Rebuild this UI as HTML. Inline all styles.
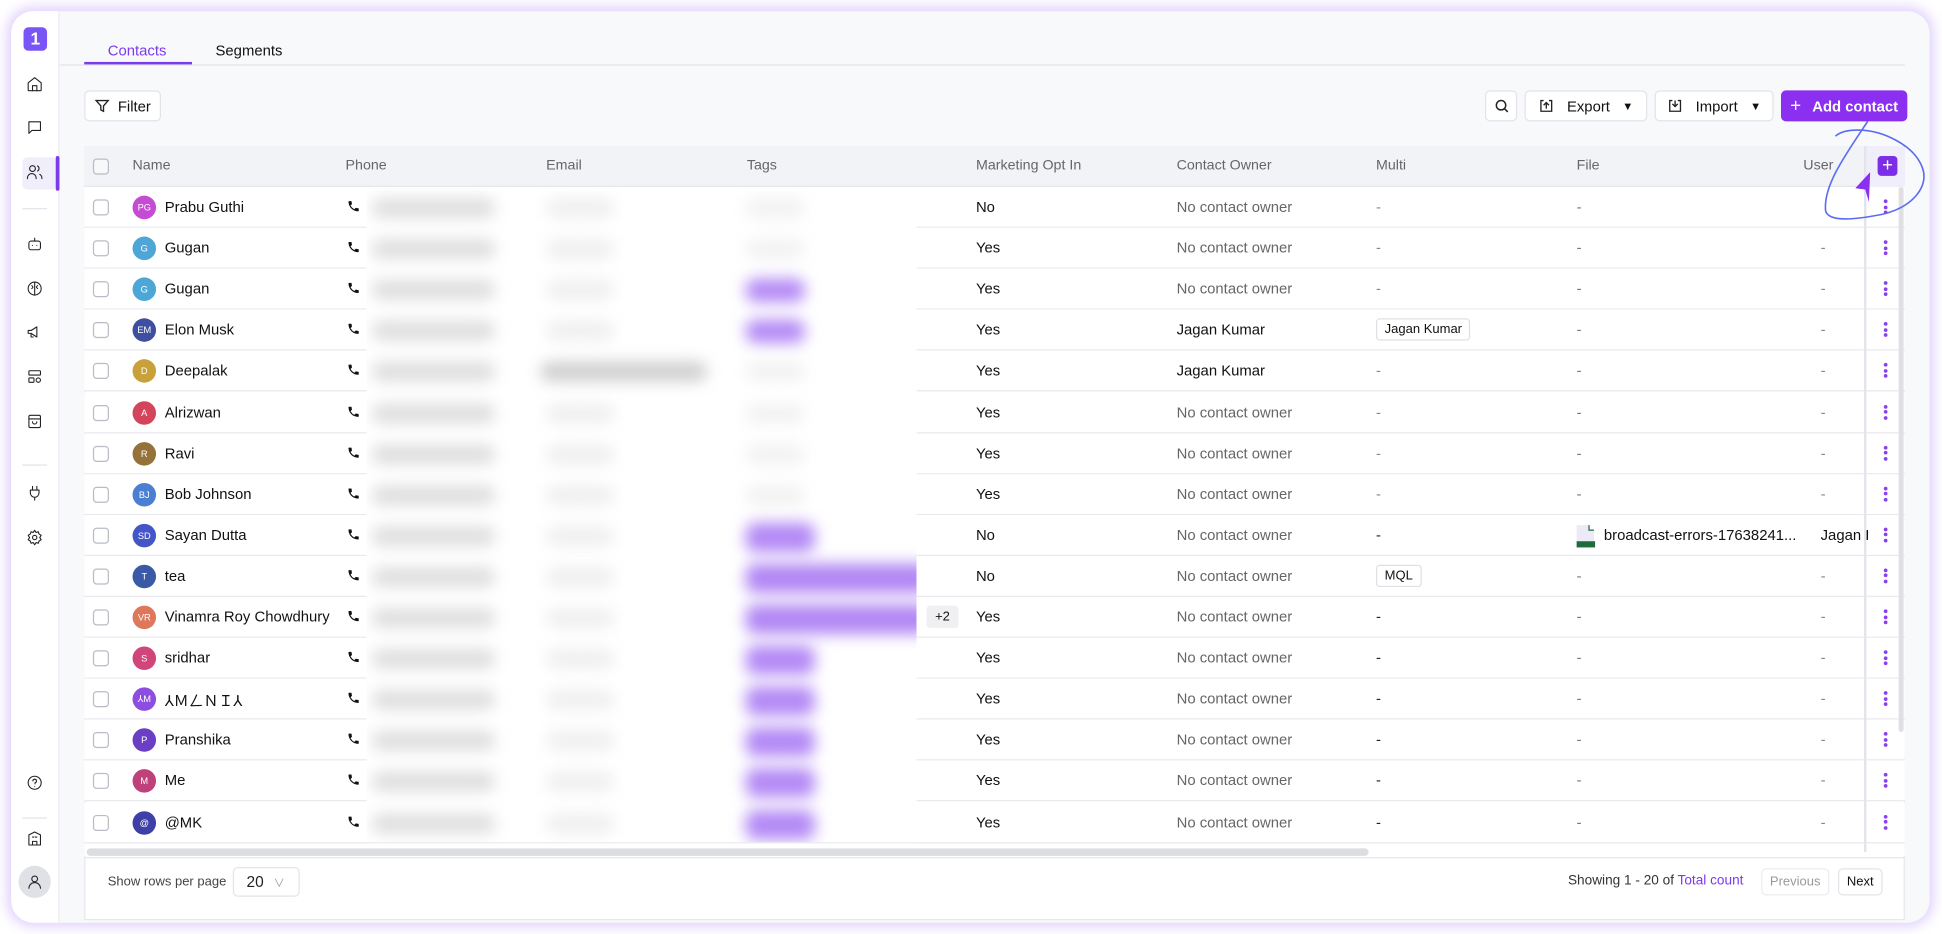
<!DOCTYPE html>
<html><head><meta charset="utf-8"><style>
*{box-sizing:border-box;margin:0;padding:0}
html,body{width:1942px;height:933px;overflow:hidden;background:#fff;font-family:"Liberation Sans","Noto Sans CJK JP",sans-serif}
#s{position:absolute;left:0;top:0;width:1568px;height:754px;transform:scale(1.23852);transform-origin:0 0}
.a{position:absolute}
#card{left:9px;top:9px;width:1549px;height:736px;border-radius:18px;background:#f8f9fb;box-shadow:0 0 10px 3px rgba(168,120,250,.35);overflow:hidden}
#side{left:0;top:0;width:39px;height:736px;background:#fff;border-right:1px solid #ececf1}
.ic{position:absolute;left:12px;width:14px;height:14px}
.ic svg{width:14px;height:14px;fill:none;stroke:#222;stroke-width:1.5;stroke-linecap:round;stroke-linejoin:round}
.sep{position:absolute;left:9px;width:20px;height:1px;background:#e4e4ea}
.t{font-size:12px;color:#111;white-space:nowrap}
.btn{position:absolute;top:73px;height:25px;background:#fff;border:1px solid #e3e4ea;border-radius:4px;font-size:12px;color:#111;display:flex;align-items:center;justify-content:center;gap:6px;white-space:nowrap}
.hd{position:absolute;top:128px;font-size:11.5px;color:#666}
.row{position:absolute;left:68px;width:1470px;height:33px;background:#fff;border-bottom:1px solid #e8e9ee}
.cb{position:absolute;left:7px;top:10px;width:13px;height:13px;border:1px solid #b9bcc6;border-radius:3px;background:#fff}
.av{position:absolute;left:39px;top:7px;width:19px;height:19px;border-radius:50%;color:#fff;font-size:7.5px;display:flex;align-items:center;justify-content:center}
.nm{position:absolute;left:65px;top:9px;font-size:12px;color:#111;white-space:nowrap}
.ph{position:absolute;left:212px;top:8px}
.c{position:absolute;top:9px;font-size:12px;white-space:nowrap}
.dash{color:#777}
.chip{position:absolute;top:7px;height:18px;border:1px solid #dfe0e6;border-radius:3px;background:#fff;font-size:10.5px;padding:0 6px;line-height:16px;color:#111}
.dots{position:absolute;left:1453px;top:10px;width:3px}
.dots i{display:block;width:3px;height:3px;border-radius:50%;background:#8a3ff0;margin-bottom:1.5px}
.bl{position:absolute;border-radius:8px;filter:blur(6px)}
</style></head><body><div id="s">
<div class="a" id="card">
 <div class="a" id="side">
  <div class="a" style="left:10px;top:13px;width:19px;height:19px;border-radius:4px;background:#7a55f5;color:#fff;font-weight:bold;font-size:14px;text-align:center;line-height:19px">1</div>
  <div class="ic" style="top:52px"><svg viewBox="0 0 24 24"><path d="M3 10l9-7 9 7v10a1 1 0 0 1-1 1H4a1 1 0 0 1-1-1z"/><path d="M9 21v-7h6v7"/></svg></div>
  <div class="ic" style="top:87px"><svg viewBox="0 0 24 24"><path d="M4 4h16v12H8l-4 4z"/></svg></div>
  <div class="a" style="left:9px;top:118px;width:28px;height:26px;background:#f1eefb;border-radius:4px"></div>
  <div class="a" style="left:36px;top:117px;width:3px;height:28px;background:#7c3aed;border-radius:2px"></div>
  <div class="ic" style="top:123px"><svg viewBox="0 0 24 24"><circle cx="9" cy="7" r="4"/><path d="M2 21v-1a6 6 0 0 1 12 0v1"/><path d="M16 3.5a4 4 0 0 1 0 7M19 15a6 6 0 0 1 3 5v1"/></svg></div>
  <div class="sep" style="top:159px"></div>
  <div class="ic" style="top:181px"><svg viewBox="0 0 24 24"><rect x="4" y="8" width="16" height="12" rx="3"/><path d="M12 4v4M9 14h0M15 14h0"/></svg></div>
  <div class="ic" style="top:217px"><svg viewBox="0 0 24 24"><circle cx="12" cy="12" r="9"/><path d="M12 3v18M8 8c2 1 2 3 0 4M16 8c-2 1-2 3 0 4"/></svg></div>
  <div class="ic" style="top:252px"><svg viewBox="0 0 24 24"><path d="M3 10v4h4l8 5V5L7 10z"/><path d="M7 14v5h3"/></svg></div>
  <div class="ic" style="top:288px"><svg viewBox="0 0 24 24"><rect x="4" y="4" width="16" height="6" rx="1"/><rect x="4" y="14" width="7" height="6" rx="1"/><circle cx="17" cy="17" r="3"/></svg></div>
  <div class="ic" style="top:324px"><svg viewBox="0 0 24 24"><rect x="4" y="4" width="16" height="17" rx="2"/><path d="M4 9h16M9 13a3 3 0 0 0 6 0"/></svg></div>
  <div class="sep" style="top:366px"></div>
  <div class="ic" style="top:382px"><svg viewBox="0 0 24 24"><path d="M9 3v5M15 3v5M6 8h12v4a6 6 0 0 1-12 0zM12 18v4"/></svg></div>
  <div class="ic" style="top:418px"><svg viewBox="0 0 24 24"><circle cx="12" cy="12" r="3"/><path d="M12 2l2 3 3-1 1 3 3 2-2 3 2 3-3 2-1 3-3-1-2 3-2-3-3 1-1-3-3-2 2-3-2-3 3-2 1-3 3 1z"/></svg></div>
  <div class="ic" style="top:616px"><svg viewBox="0 0 24 24"><circle cx="12" cy="12" r="9"/><path d="M9.5 9.5a2.5 2.5 0 1 1 3 2.5v1.5M12 17h0"/></svg></div>
  <div class="sep" style="top:651px"></div>
  <div class="ic" style="top:661px"><svg viewBox="0 0 24 24"><path d="M4 21V7l8-4 8 4v14zM9 21v-5h6v5M9 10h2M13 10h2"/></svg></div>
  <div class="a" style="left:6px;top:690px;width:26px;height:26px;border-radius:50%;background:#dfe1e7"></div>
  <div class="ic" style="top:696px"><svg viewBox="0 0 24 24"><circle cx="12" cy="8" r="4"/><path d="M4 21a8 8 0 0 1 16 0"/></svg></div>
 </div>
 <div class="a" style="left:39px;top:43px;width:1490px;height:1px;background:#e2e4ea"></div>
 <div class="a t" style="left:78px;top:25px;color:#7c3aed">Contacts</div>
 <div class="a" style="left:59px;top:41px;width:87px;height:2px;background:#7c3aed"></div>
 <div class="a t" style="left:165px;top:25px">Segments</div>
</div>
<div class="btn" style="left:68px;width:62px"><svg width="13" height="13" viewBox="0 0 24 24" fill="none" stroke="#222" stroke-width="2"><path d="M3 4h18l-7 8v8l-4-2v-6z"/></svg>Filter</div>
<div class="btn" style="left:1199px;width:26px"><svg width="13" height="13" viewBox="0 0 24 24" fill="none" stroke="#222" stroke-width="2.2"><circle cx="11" cy="11" r="7"/><path d="M16 16l5 5"/></svg></div>
<div class="btn" style="left:1231px;width:99px;gap:10px"><svg width="13" height="13" viewBox="0 0 24 24" fill="none" stroke="#222" stroke-width="2"><path d="M8 4H4v16h16V4h-4M12 16V7M8 11l4-4 4 4"/></svg>Export <span style="font-size:9px">▼</span></div>
<div class="btn" style="left:1336px;width:96px;gap:10px"><svg width="13" height="13" viewBox="0 0 24 24" fill="none" stroke="#222" stroke-width="2"><path d="M8 4H4v16h16V4h-4M12 4v9M8 9l4 4 4-4"/></svg>Import <span style="font-size:9px">▼</span></div>
<div class="btn" style="left:1438px;width:102px;background:#8b2ff0;border-color:#8b2ff0;color:#fff;font-weight:600;gap:9px"><span style="font-size:15px;font-weight:300">+</span>Add contact</div>
<div class="a" style="left:68px;top:118px;width:1470px;height:625px;background:#fff;border:1px solid #e6e7ec"></div>
<div class="a" style="left:68px;top:118px;width:1470px;height:33px;background:#f1f3f7;border-bottom:1px solid #e5e7ec"></div>
<div class="cb" style="left:75px;top:128px;background:#f7f8fa"></div>
<div class="hd" style="left:107px">Name</div><div class="hd" style="left:279px">Phone</div><div class="hd" style="left:441px">Email</div><div class="hd" style="left:603px">Tags</div><div class="hd" style="left:788px">Marketing Opt In</div><div class="hd" style="left:950px">Contact Owner</div><div class="hd" style="left:1111px">Multi</div><div class="hd" style="left:1273px">File</div><div class="hd" style="left:1456px">User</div>
<div id="rows"></div>
<div class="a" style="left:296px;top:152px;width:444px;height:528px;background:#fff;overflow:hidden" id="blur"></div>
<div class="a" style="left:1505px;top:118px;width:2px;height:570px;background:#e4e5ea"></div>
<div class="a" style="left:1507px;top:118px;width:31px;height:33px;background:#f1eefb"></div>
<div class="a" style="left:1516px;top:126px;width:16px;height:16px;border-radius:3px;background:#7c2ee6;color:#fff;font-size:15px;line-height:15px;text-align:center">+</div>
<div class="a" style="left:1533px;top:151px;width:4px;height:440px;background:#e0e0e4;border-radius:2px"></div>
<div class="a" style="left:70px;top:685px;width:1035px;height:6px;background:#dcdde1;border-radius:3px"></div>
<div class="a" style="left:68px;top:692px;width:1470px;height:1px;background:#e6e7ec"></div>
<div class="a" style="left:87px;top:706px;font-size:10.5px;color:#444;white-space:nowrap">Show rows per page</div>
<div class="a" style="left:188px;top:700px;width:54px;height:24px;border:1px solid #e3e4ea;border-radius:4px;font-size:12.5px;padding:0 10px;color:#222;display:flex;align-items:center;white-space:nowrap;background:#fff">20<span style="font-size:9px;color:#999;margin-left:8px">∨</span></div>
<div class="a" style="left:1266px;top:705px;font-size:11px;color:#333;white-space:nowrap">Showing 1 - 20 of <span style="color:#7c3aed">Total count</span></div>
<div class="a" style="left:1422px;top:701px;width:55px;height:22px;border:1px solid #ececf0;border-radius:4px;font-size:10.5px;color:#999;text-align:center;line-height:20px">Previous</div>
<div class="a" style="left:1484px;top:701px;width:36px;height:22px;border:1px solid #e3e4ea;border-radius:4px;font-size:10.5px;color:#111;text-align:center;line-height:20px">Next</div>
<svg class="a" style="left:1460px;top:95px" width="100" height="90" viewBox="0 0 100 90" fill="none">
<path d="M48 3 C30 30 12 55 14 75 C16 85 40 82 60 78 C85 72 98 55 92 40 C85 22 60 10 40 10 C30 10 25 12 22 15" stroke="#5b6cf0" stroke-width="1.3"/>
<path d="M50 44 L38 57 L46 58 L49 68 Z" fill="#8b2ff0"/>
</svg>
<script>
const R=[["PG","Prabu Guthi","#c54bd4","No","No contact owner",0,"-","-","",0],
["G","Gugan","#4ea6d6","Yes","No contact owner",0,"-","-","-",0],
["G","Gugan","#4ea6d6","Yes","No contact owner",0,"-","-","-",1],
["EM","Elon Musk","#3d4f9e","Yes","Jagan Kumar",1,"chip:Jagan Kumar","-","-",1],
["D","Deepalak","#c9a13a","Yes","Jagan Kumar",1,"-","-","-",0],
["A","Alrizwan","#d3455a","Yes","No contact owner",0,"-","-","-",0],
["R","Ravi","#94723a","Yes","No contact owner",0,"-","-","-",0],
["BJ","Bob Johnson","#4a7fd1","Yes","No contact owner",0,"-","-","-",0],
["SD","Sayan Dutta","#4455c8","No","No contact owner",0,"-d","file","Jagan I",2],
["T","tea","#3a5aa5","No","No contact owner",0,"chip:MQL","-","-",3],
["VR","Vinamra Roy Chowdhury","#df775a","Yes","No contact owner",0,"-d","-","-",4],
["S","sridhar","#d0457a","Yes","No contact owner",0,"-d","-","-",2],
["⅄M","⅄ＭㄥＮＩ⅄","#8d4de0","Yes","No contact owner",0,"-d","-","-",2],
["P","Pranshika","#6b3fc4","Yes","No contact owner",0,"-d","-","-",2],
["M","Me","#c0407a","Yes","No contact owner",0,"-d","-","-",2],
["@","@MK","#3f3fa8","Yes","No contact owner",0,"-d","-","-",2]];
const ph='<svg width="11" height="11" viewBox="0 0 24 24"><path fill="#111" d="M6.6 10.8a15 15 0 0 0 6.6 6.6l2.2-2.2a1 1 0 0 1 1-.25 11 11 0 0 0 3.6.6 1 1 0 0 1 1 1V20a1 1 0 0 1-1 1A17 17 0 0 1 3 4a1 1 0 0 1 1-1h3.5a1 1 0 0 1 1 1 11 11 0 0 0 .6 3.6 1 1 0 0 1-.25 1z"/></svg>';
let h='',b='';
R.forEach((r,i)=>{const y=151+33.1*i;
let m=r[6].startsWith('chip:')?`<div class="chip" style="left:1043px">${r[6].slice(5)}</div>`:`<div class="c" style="left:1043px;color:${r[6]=='-d'?'#222':'#888'}">-</div>`;
let f=r[7]=='file'?`<svg class="a" style="left:1204px;top:7px" width="16" height="20" viewBox="0 0 16 20"><path d="M1 1h10l4 4v14H1z" fill="#eceaf7"/><path d="M11 1v4h4" fill="#fff" stroke="#1e6b3b"/><rect x="1" y="14" width="15" height="5" fill="#1e6b3b"/></svg><div class="c" style="left:1227px;color:#111">broadcast-errors-17638241...</div>`:`<div class="c dash" style="left:1205px">-</div>`;
h+=`<div class="row" style="top:${y}px"><div class="cb"></div><div class="av" style="background:${r[2]}">${r[0]}</div><div class="nm">${r[1]}</div><div class="ph">${ph}</div><div class="c" style="left:720px;color:#111">${r[3]}</div><div class="c" style="left:882px;color:${r[5]?'#111':'#666'}">${r[4]}</div>${m}${f}<div class="c" style="left:1402px;color:${r[8].length>1?'#111':'#888'}">${r[8]}</div>${i==10?'<div class="chip" style="left:680px;background:#f0f0f2;border-color:#f0f0f2">+2</div>':''}<div class="dots"><i></i><i></i><i></i></div></div>`;
const by=33.1*i;
b+=`<div class="bl" style="left:4px;top:${by+8}px;width:100px;height:16px;background:#dedede"></div>`;
b+=`<div class="bl" style="left:${i==4?140:145}px;top:${by+8}px;width:${i==4?135:55}px;height:16px;background:${i==4?'#cfcfcf':'#efefef'}"></div>`;
if(r[9]==1)b+=`<div class="bl" style="left:306px;top:${by+7}px;width:48px;height:19px;background:#b48af5"></div>`;
else if(r[9]==2)b+=`<div class="bl" style="left:306px;top:${by+5}px;width:56px;height:24px;background:#b48af5"></div>`;
else if(r[9]>=3)b+=`<div class="bl" style="left:306px;top:${by+5}px;width:150px;height:24px;background:#b287f4"></div>`;
else b+=`<div class="bl" style="left:306px;top:${by+8}px;width:48px;height:16px;background:#f2f2f2"></div>`;
});
h+=`<div class="row" style="top:${151+33.1*16}px;height:10px;border:none"></div>`;
document.getElementById('rows').innerHTML=h;
document.getElementById('blur').innerHTML=b;
</script>
</div></body></html>
